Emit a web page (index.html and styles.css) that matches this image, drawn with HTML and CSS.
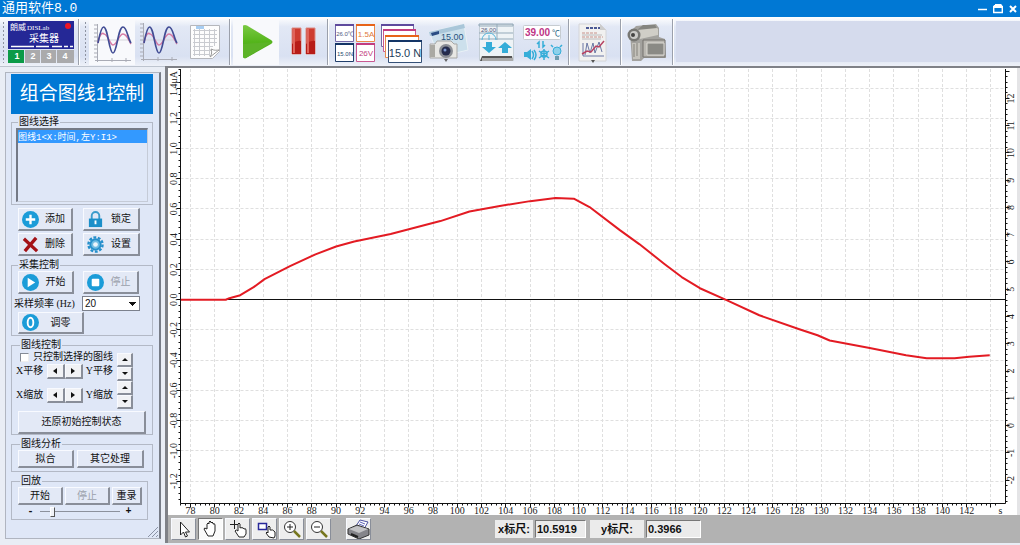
FILE: index.html
```html
<!DOCTYPE html>
<html lang="zh-CN">
<head>
    <meta charset="UTF-8">
    <meta name="viewport" content="width=device-width, initial-scale=1.0">
    <title>通用软件8.0</title>
    <link rel="stylesheet" href="styles.css">
</head>
<body>
    <!-- Window title -->
    <header class="titlebar">
        <h1>通用软件8.0</h1>
        <div class="window-buttons">
            <button type="button" aria-label="最小化"><svg width="10" height="10"><path d="M0 5.500h9" stroke="#fff" stroke-width="1.500"/></svg></button>
            <button type="button" aria-label="还原"><svg width="10" height="10"><path d="M.7 2.500h8.600v6H.7zM2 .7h6.500" fill="none" stroke="#fff" stroke-width="1.400"/><path d="M1 1h8v3H1z" fill="#fff"/></svg></button>
            <button type="button" aria-label="关闭"><svg width="10" height="10"><path d="M2 2l6 6M8 2L2 8" stroke="#fff" stroke-width="2"/></svg></button>
        </div>
    </header>

    <!-- Toolbar -->
    <nav class="toolbar">
        <span class="grip"></span>
        <button type="button" class="collector" aria-label="采集器">
            <svg width="66" height="42">
                <path d="M0 0h66v28H0z" fill="#252896"/>
                <text x="2" y="9" font-size="8" fill="#fff">朗威</text>
                <text x="19" y="9" font-size="7" fill="#fff" class="serif">DISLab</text>
                <circle cx="60" cy="5" r="3" fill="#ee1525"/>
                <text x="21" y="21" font-size="10" fill="#fff">采集器</text>
                <path d="M3 25.500h23M28 25.500h13M44 25.500h10M56 25.500h4M62 25.500h3" stroke="#fff" stroke-width="1.500"/>
                <path d="M0 29h16v13H0z" fill="#0b9a47"/>
                <path d="M17 29h15v13H17zM33 29h15v13H33zM49 29h17v13H49z" fill="#aaaaac"/>
                <g font-size="9" font-weight="bold" fill="#fff" text-anchor="middle">
                    <text x="9" y="38">1</text><text x="25" y="38">2</text><text x="41" y="38">3</text><text x="57" y="38">4</text>
                </g>
            </svg>
        </button>
        <span class="separator"></span>
        <span class="grip"></span>
        <button type="button" class="tool pressed" aria-label="组合图线1">
            <svg width="44" height="44">
                <path d="M7.500 4v38M4 5h3M4 9h3M4 13h3M4 17h3M4 21h3M4 25h3M4 29h3M4 33h3M4 37h3M5 40.500h36M22 38v4M36 38v4" stroke="#a9abb5" fill="none"/>
                <path d="M8 20h33" stroke="#d5d5dc"/>
                <path d="M8 23C10 12 13 13 14 14C18 14 20 25 23 25C27 25 29 14 33 14C37 14 39 21 41 24" fill="none" stroke="#d67ba5" stroke-width="1.500"/>
                <path d="M8 23C9 18 11 7 13.500 7C18 7 19 33 23 33C27 33 28 7 33 7C37 7 38 19 41 23" fill="none" stroke="#414c94" stroke-width="1.700"/>
            </svg>
        </button>
        <button type="button" class="tool" aria-label="组合图线2">
            <svg width="44" height="44">
                <path d="M7.500 3v38M4 4h3M4 8h3M4 12h3M4 16h3M4 20h3M4 24h3M4 28h3M4 32h3M4 36h3M5 39.500h36M22 37v4M36 37v4" stroke="#a9abb5" fill="none"/>
                <path d="M8 20h33" stroke="#d5d5dc"/>
                <path d="M8 23C10 12 13 13 14 14C18 14 20 25 23 25C27 25 29 14 33 14C37 14 39 21 41 24" fill="none" stroke="#d67ba5" stroke-width="1.500"/>
                <path d="M8 23C9 18 11 7 13.500 7C18 7 19 33 23 33C27 33 28 7 33 7C37 7 38 19 41 23" fill="none" stroke="#414c94" stroke-width="1.700"/>
            </svg>
        </button>
        <button type="button" class="tool" aria-label="数据表格">
            <svg width="44" height="44">
                <path d="M8.500 5.500h29v26l-7 7h-22z" fill="#fdfdfd" stroke="#b5b7bc"/>
                <path d="M14 6h8v3h-8z" fill="#a7cdf2"/>
                <path d="M11 10.500h24M11 14.500h24M11 18.500h24M11 22.500h24M11 26.500h20M11 30.500h18M11 34.500h17M12.500 9v27M17.500 9v27M22.500 9v27M27.500 9v27M32.500 9v17" stroke="#c9cbd0"/>
                <path d="M28 37c2-3 2-5 1-8c4 2 6 1 8 1z" fill="#fff" stroke="#999"/>
            </svg>
        </button>
        <span class="separator"></span>
        <button type="button" class="tool pressed" aria-label="开始采集">
            <svg width="44" height="44">
                <defs><linearGradient id="play" x2="0" y2="1"><stop stop-color="#7ac943"/><stop offset=".5" stop-color="#55b51c"/><stop offset="1" stop-color="#49a512"/></linearGradient></defs>
                <path d="M9 5.500q2-1 4 0L37 20q3 2 0 4L12 38q-3 1-3-2z" fill="url(#play)"/>
                <path d="M9 24L38 22L12 38q-3 1-3-2z" fill="#5cb328"/>
            </svg>
        </button>
        <button type="button" class="tool" aria-label="暂停采集">
            <svg width="44" height="44">
                <path d="M12 8h9v26h-9zM26 8h9v26h-9z" fill="#ce3c30" stroke="#dd8d84"/>
                <path d="M12 24q5-4 9-3v13h-9zM26 24q5-4 9-3v13h-9z" fill="#b71c18"/>
                <path d="M13 9h2v24h-2zM27 9h2v24h-2z" fill="#e0645b"/>
            </svg>
        </button>
        <span class="separator"></span>
        <button type="button" class="tool wide" aria-label="多窗口显示">
            <svg width="44" height="44">
                <g fill="#fff" stroke-width="1">
                    <path d="M2.500 4.500h18v17h-18z" stroke="#756aa8"/><path d="M23.500 4.500h18v17h-18z" stroke="#eb8a4b"/>
                    <path d="M2.500 23.500h18v18h-18z" stroke="#213f6c"/><path d="M23.500 23.500h18v18h-18z" stroke="#c95992"/>
                </g>
                <path d="M2 4h19v2H2z" fill="#5e4a9d"/><path d="M23 4h19v2H23z" fill="#e76319"/>
                <path d="M2 23h19v2H2z" fill="#143566"/><path d="M23 23h19v2H23z" fill="#c33c80"/>
                <g text-anchor="middle">
                    <text x="12" y="16" font-size="6" fill="#51577e">26.0℃</text><text x="33" y="17" font-size="8" fill="#e0793c">1.5A</text>
                    <text x="12" y="36" font-size="6" fill="#25486e">15.0N</text><text x="33" y="36" font-size="8" fill="#c33c80">26V</text>
                </g>
            </svg>
        </button>
        <button type="button" class="tool wide" aria-label="层叠窗口">
            <svg width="44" height="44">
                <g fill="#fff">
                    <path d="M1.500 4.500h32v22h-32z" stroke="#756aa8"/><path d="M3.500 9.500h32v22h-32z" stroke="#c95992"/>
                    <path d="M5.500 15.500h33v22h-33z" stroke="#e58a50"/><path d="M8.500 20.500h33v22h-33z" stroke="#355177"/>
                </g>
                <path d="M1 4h33v2H1z" fill="#5e4a9d"/><path d="M3 9h33v2H3z" fill="#c33c80"/>
                <path d="M5 15h34v2H5z" fill="#e76319"/><path d="M8 20h34v2H8z" fill="#143566"/>
                <text x="25" y="37" font-size="11" text-anchor="middle" fill="#1c3d5c">15.0 N</text>
            </svg>
        </button>
        <button type="button" class="tool wide" aria-label="屏幕截图">
            <svg width="44" height="44">
                <path d="M2 12L37 4l4 26l-29 7z" fill="#cce0ec" stroke="#e9f1f6"/>
                <path d="M2 12L37 4l1 4L3 16z" fill="#a9c6d9"/><path d="M4 13l8-2v3l-7 2z" fill="#294d83"/>
                <text x="14" y="20" font-size="9" fill="#28537d">15.00</text>
                <path d="M3 24h5l2-3h14l3 3h3v14H3z" fill="#e7e7e4" stroke="#a7a7a5"/><path d="M3 25h5v12H3z" fill="#aaa9a3"/>
                <circle cx="19" cy="31" r="7" fill="#898d94"/><circle cx="19" cy="31" r="4.500" fill="#242b4c"/><circle cx="18" cy="30" r="1.500" fill="#7b97cf"/>
                <path d="M17 39h4l-2 3z" fill="#666"/>
            </svg>
        </button>
        <button type="button" class="tool wide" aria-label="数据导入导出">
            <svg width="44" height="44">
                <path d="M5.500 4.500h34v36h-34z" fill="#eef3f6" stroke="#c4ced6"/>
                <path d="M5 4h34v2H5zM23 4v16M5 13h34M5 19h34" fill="none" stroke="#93a9b9"/>
                <text x="7" y="12" font-size="6" fill="#557">26.00</text>
                <path d="M8 20a7 7 0 0 1 14 0M15 20v-5" fill="none" stroke="#58b5da"/>
                <path d="M12 22h6v5h4l-7 6l-7-6h4zM28 33h6v-5h4l-7-6l-7 6h4z" fill="#35add8"/>
                <path d="M8 36h30l1 5H6z" fill="#555"/><path d="M8 38h31v3H8z" fill="#aaa"/>
            </svg>
        </button>
        <button type="button" class="tool wide" aria-label="控制输出">
            <svg width="44" height="44">
                <rect x="2.500" y="5.500" width="37" height="14" rx="1" fill="#fff" stroke="#c7ccd1"/>
                <text x="4" y="16" font-size="10" font-weight="bold" fill="#be3485">39.00</text><text x="31" y="16" font-size="8" fill="#29667f">℃</text>
                <g stroke="#35add8" stroke-width="1.500" fill="none"><path d="M18 28v-6l-2 2M22 21v6l2-2M11 31q3 4 0 8M13 30q4 5 0 10M23 29v11M18 31l10 7M28 31l-10 7M32 27l-2-2M39 27l2-2"/><circle cx="23" cy="34" r="3"/></g>
                <path d="M3 32h3l4-3v11l-4-3H3z" fill="#35add8"/><circle cx="36" cy="31" r="4" fill="#8ed1eb" stroke="#35add8"/><path d="M34 36h4v4h-4z" fill="#6f9caf"/>
            </svg>
        </button>
        <span class="separator"></span>
        <button type="button" class="tool" aria-label="实验报告">
            <svg width="44" height="44">
                <path d="M6 4h21l6 6v31H6z" fill="#f1f1f0" stroke="#d4d5d8"/><path d="M27 4v6h6z" fill="#ccc"/>
                <path d="M13 8h14" stroke="#4b5995" stroke-width="2" stroke-dasharray="3 1"/><path d="M9 13h16M9 17h21" stroke="#c8928a" stroke-dasharray="3 1"/><path d="M9 15h20M9 19h19" stroke="#bcbcbc"/>
                <path d="M10 23v13h21M12 35l2-12l3 10l3-10l2 10l4-11l3 10" fill="none" stroke="#6a77a4"/><path d="M9 34l5-3l4 1l5-6l3 1l5-6" fill="none" stroke="#b74363" stroke-width="1.500"/>
                <path d="M18 40h4l-2 3z" fill="#555"/>
            </svg>
        </button>
        <span class="separator"></span>
        <button type="button" class="tool" aria-label="录像">
            <svg width="44" height="44">
                <path d="M5 12l6-6l20-2l3 4v9l6 2l1 19H19l-3 3H7z" fill="#a3a29e"/><path d="M10 10L30 6l3 3v6L15 19z" fill="#d0cec7"/>
                <path d="M12 10l6-5h12l2 3z" fill="#858580"/><circle cx="9" cy="15" r="6.500" fill="#777773"/><circle cx="9" cy="15" r="4" fill="#cbcbc8"/><circle cx="8" cy="15" r="2" fill="#454543"/>
                <path d="M18 20h22v17H18z" fill="#b9b7b1" stroke="#74736f"/><path d="M22 23h17v12H22z" fill="#8a8a85" stroke="#dcdad4"/>
                <path d="M7 23h8v16H8z" fill="#c4c2bb"/><path d="M9 24v13M12 23v13" stroke="#85837d"/>
            </svg>
        </button>
        <span class="separator"></span>
        <span class="toolbar-rest"></span>
    </nav>

    <div class="workspace">
        <!-- Control panel -->
        <aside class="sidebar">
            <form class="panel">
                <h2>组合图线1控制</h2>

                <fieldset class="curve-select">
                    <legend>图线选择</legend>
                    <select size="6" aria-label="图线选择">
                        <option selected>图线1&lt;X:时间,左Y:I1&gt;</option>
                    </select>
                </fieldset>

                <div class="edit-buttons">
                    <button type="button" class="btn icon-btn">
                        <svg viewBox="0 0 18 18"><circle cx="9" cy="9" r="9" fill="#1b9cd8"/><path d="M9 4v10M4 9h10" stroke="#fff" stroke-width="2.500"/></svg>
                        <span>添加</span>
                    </button>
                    <button type="button" class="btn icon-btn">
                        <svg viewBox="0 0 18 18"><path d="M5 9V5a4 4 0 0 1 8 0v4" fill="none" stroke="#3c9ccb" stroke-width="2"/><path d="M2 8h14v9H2z" fill="#1b8fc9"/><path d="M9 10v4" stroke="#fff" stroke-width="2"/></svg>
                        <span>锁定</span>
                    </button>
                    <button type="button" class="btn icon-btn">
                        <svg viewBox="0 0 18 18"><path d="M2 3l14 13M15 2L3 16" stroke="#a31217" stroke-width="3.500"/></svg>
                        <span>删除</span>
                    </button>
                    <button type="button" class="btn icon-btn">
                        <svg viewBox="0 0 18 18"><circle cx="9" cy="9" r="7.500" fill="none" stroke="#258fcb" stroke-width="2.500" stroke-dasharray="3 1.700"/><circle cx="9" cy="9" r="5.500" fill="#70bce2" stroke="#258fcb" stroke-width="2"/><circle cx="9" cy="9" r="2.500" fill="#eef5fc"/></svg>
                        <span>设置</span>
                    </button>
                </div>

                <fieldset class="capture">
                    <legend>采集控制</legend>
                    <div class="capture-row">
                        <button type="button" class="btn icon-btn">
                            <svg viewBox="0 0 18 18"><circle cx="9" cy="9" r="9" fill="#1b9cd8"/><path d="M6 4l8 5l-8 5z" fill="#fff"/></svg>
                            <span>开始</span>
                        </button>
                        <button type="button" class="btn icon-btn" disabled>
                            <svg viewBox="0 0 18 18"><circle cx="9" cy="9" r="9" fill="#1b9cd8"/><rect x="5" y="5" width="8" height="8" rx="1" fill="#fff"/></svg>
                            <span>停止</span>
                        </button>
                    </div>
                    <div class="rate-row">
                        <label for="rate">采样频率 (Hz)</label>
                        <select id="rate"><option>20</option><option>50</option><option>100</option></select>
                    </div>
                    <button type="button" class="btn icon-btn zero-btn">
                        <svg viewBox="0 0 18 18"><circle cx="9" cy="9" r="9" fill="#1b9cd8"/><ellipse cx="9" cy="9" rx="3" ry="5" fill="none" stroke="#fff" stroke-width="2"/></svg>
                        <span>调零</span>
                    </button>
                </fieldset>

                <fieldset class="curve-control">
                    <legend>图线控制</legend>
                    <div class="control-grid">
                        <div class="control-rows">
                            <div class="check-row"><input type="checkbox" id="only"><label for="only">只控制选择的图线</label></div>
                            <div class="shift-row"><span>X平移</span><div class="pair"><button type="button" class="btn arrow left" aria-label="X左移"></button><button type="button" class="btn arrow right" aria-label="X右移"></button></div><span>Y平移</span></div>
                            <div class="shift-row"><span>X缩放</span><div class="pair"><button type="button" class="btn arrow left" aria-label="X缩小"></button><button type="button" class="btn arrow right" aria-label="X放大"></button></div><span>Y缩放</span></div>
                        </div>
                        <div class="spin">
                            <button type="button" class="btn arrow up" aria-label="Y上移"></button>
                            <button type="button" class="btn arrow down" aria-label="Y下移"></button>
                            <button type="button" class="btn arrow up" aria-label="Y放大"></button>
                            <button type="button" class="btn arrow down" aria-label="Y缩小"></button>
                        </div>
                    </div>
                    <button type="button" class="btn reset-btn">还原初始控制状态</button>
                </fieldset>

                <fieldset class="analysis">
                    <legend>图线分析</legend>
                    <div class="analysis-row">
                        <button type="button" class="btn">拟合</button>
                        <button type="button" class="btn">其它处理</button>
                    </div>
                </fieldset>

                <fieldset class="playback">
                    <legend>回放</legend>
                    <div class="playback-row">
                        <button type="button" class="btn">开始</button>
                        <button type="button" class="btn" disabled>停止</button>
                        <button type="button" class="btn">重录</button>
                    </div>
                    <div class="speed-row">
                        <span>-</span><input type="range" min="0" max="100" value="14" aria-label="回放速度"><span>+</span>
                    </div>
                </fieldset>
                <svg class="resize-grip" width="10" height="10"><path d="M0 10L10 0M4 10l6-6M8 10l2-2" stroke="#8b93a5"/></svg>
            </form>
        </aside>

        <main class="plot-window">
            <div class="plot"><svg id="chart" role="img" aria-label="电流-时间图线"></svg></div>

            <!-- Cursor tools and readouts -->
            <footer class="statusbar">
                <div class="cursor-tools">
                    <button type="button" class="btn" aria-label="选择"><svg width="22" height="20"><path d="M7.500 3v13l3-3l2 5l2-1l-2-4h4z" fill="#fff" stroke="#222"/></svg></button>
                    <button type="button" class="btn active" aria-label="平移"><svg width="22" height="20"><path d="M8 17l-4-7q0-2 3 0V5q1-2 2 0V3q1-2 2 0v1q1-2 2 0v1q2-1 2 1v6l-2 5z" fill="#fff" stroke="#222"/></svg></button>
                    <button type="button" class="btn" aria-label="十字光标"><svg width="22" height="20"><path d="M3 5.500h9M7.500 1v9" stroke="#222"/><path d="M12 18l-4-6q1-2 3 0V5q1-2 2 0v4q1-1 2 0q1-1 2 1q2-1 2 1v4l-2 3z" fill="#fff" stroke="#222"/></svg></button>
                    <button type="button" class="btn" aria-label="选区"><svg width="22" height="20"><path d="M4.500 4.500h8v6h-8z" fill="#fff" stroke="#29299a" stroke-width="1.500"/><path d="M15 18l-3-4q1-2 2 0V8q1-2 2 0v3q3-1 5 2v4l-1 2z" fill="#fff" stroke="#222"/></svg></button>
                    <button type="button" class="btn" aria-label="放大"><svg width="22" height="20"><circle cx="9" cy="8" r="5.500" fill="#fff" stroke="#333"/><path d="M6 8h6M9 5v6" stroke="#222"/><path d="M13 12l6 6" stroke="#77771f" stroke-width="2.500"/></svg></button>
                    <button type="button" class="btn" aria-label="缩小"><svg width="22" height="20"><circle cx="9" cy="8" r="5.500" fill="#fff" stroke="#333"/><path d="M6 8h6" stroke="#222"/><path d="M13 12l6 6" stroke="#77771f" stroke-width="2.500"/></svg></button>
                </div>
                <button type="button" class="btn print" aria-label="打印"><svg width="24" height="20"><path d="M9 7l4-6l8 2l-4 7z" fill="#fff" stroke="#4c50a0"/><path d="M13 3l5 2M12 5l5 2" stroke="#5d63b9"/><path d="M1 10l9-4l12 4v6l-10 4L1 15z" fill="#85858a" stroke="#333"/><path d="M2 10l8-3l11 3l-9 4z" fill="#c3c3c5"/><path d="M4 15l7 3" stroke="#222" stroke-width="2"/></svg></button>
                <div class="readouts">
                    <label for="cursor-x">x标尺:</label><input id="cursor-x" type="text" value="10.5919" readonly>
                    <label for="cursor-y" class="label-y">y标尺:</label><input id="cursor-y" type="text" value="0.3966" readonly>
                </div>
            </footer>
        </main>
    </div>
    <script src="chart.js"></script>
</body>
</html>
```

FILE: styles.css
```css
* {
    box-sizing: border-box;
}

body {
    margin: 0;
    min-height: 100vh;
    display: flex;
    flex-direction: column;
    background: #e9edf5;
    color: #111;
    font-family: "Liberation Serif", "Noto Sans CJK SC", sans-serif;
    font-size: 10px;
    line-height: 12px;
}

button, input, select {
    font: inherit;
    color: inherit;
    margin: 0;
    padding: 0;
}

svg {
    display: block;
    font-family: "Liberation Sans", "Noto Sans CJK SC", sans-serif;
}

.serif {
    font-family: "Liberation Serif", serif;
}

/* Title bar */
.titlebar {
    display: flex;
    justify-content: space-between;
    align-items: center;
    height: 17px;
    padding: 0 2px;
    background: #0078d4;
    color: #fff;
}

.titlebar h1 {
    margin: 0;
    font: 13px/17px "Liberation Mono", "Noto Sans CJK SC", monospace;
}

.window-buttons {
    display: flex;
    gap: 5px;
}

.window-buttons button {
    border: 0;
    background: none;
}

/* Toolbar */
.toolbar {
    display: flex;
    align-items: center;
    height: 49px;
    background: linear-gradient(#fff, #e2e8f5 20%, #d9e1f2 80%, #eef1f8);
}

.toolbar button {
    display: flex;
    align-items: center;
    justify-content: center;
    border: 0;
    background: none;
    flex: none;
}

.collector {
    padding: 0 2px 0 1px;
}

.tool {
    width: 46px;
    height: 46px;
}

.toolbar .tool.wide {
    width: 47px;
}

.toolbar .tool.pressed {
    background: #f8f9fc;
}

.grip {
    width: 3px;
    height: 42px;
    margin: 0 2px;
    background: radial-gradient(circle, #8d93a1 1px, transparent 1px) 0 0 / 3px 4px;
}

.separator {
    width: 2px;
    height: 46px;
    margin: 0 2px;
    border-left: 1px solid #9ba0ab;
    border-right: 1px solid #fff;
}

.toolbar-rest {
    flex: 1;
    height: 41px;
    background: #d5dbed;
}

/* Layout below toolbar */
.workspace {
    flex: 1;
    display: grid;
    grid-template-columns: 165px 1fr;
    padding-bottom: 2px;
}

.sidebar {
    padding: 5px 4px 4px 5px;
    border-top: 1px solid #bdc4cf;
    background: #e9edf5;
}

.panel {
    position: relative;
    height: 100%;
    padding: 1px 6px 0 5px;
    border: 1px solid #b0b5c0;
    border-right: 2px solid #777c87;
    background: #dfe7f7;
}

.panel h2 {
    margin: 0 0 2px;
    background: #0078d4;
    color: #fff;
    text-align: center;
    font: 19px/40px "Liberation Sans", "Noto Sans CJK SC", sans-serif;
}

fieldset {
    min-width: 0;
    margin: 0 0 3px;
    padding: 0 4px;
    border: 1px solid #b3b9c6;
}

legend {
    margin-left: 2px;
    padding: 0 1px;
    height: 12px;
}

/* Raised buttons */
.btn {
    display: flex;
    align-items: center;
    justify-content: center;
    background: #e3e9f6;
    border: 1px solid #f8faff;
    border-right: 2px solid #898e99;
    border-bottom: 2px solid #898e99;
    white-space: nowrap;
}

.btn:disabled {
    color: #9aa0ab;
}

.icon-btn {
    height: 23px;
    padding: 0 0 0 3px;
    justify-content: flex-start;
}

.icon-btn svg {
    width: 17px;
    height: 17px;
    flex: none;
}

.icon-btn span {
    flex: 1;
    text-align: center;
}

.curve-select {
    height: 89px;
}

.curve-select select {
    display: block;
    width: 100%;
    height: 74px;
    overflow: hidden;
    border: 1px solid #c5cbd7;
    border-top: 2px solid #747985;
    border-left: 2px solid #747985;
    border-radius: 0;
    background: #dfe7f7;
    font: 9px/12px "Liberation Mono", "Noto Sans CJK SC", monospace;
    outline: none;
}

.curve-select option {
    height: 13px;
    padding: 0;
}

.curve-select option:checked {
    background: #3399ff linear-gradient(#3399ff, #3399ff);
    color: #fff;
}

.edit-buttons {
    display: grid;
    grid-template-columns: 55px 57px;
    gap: 2px 10px;
    margin: 0 0 3px 7px;
}

.capture {
    height: 77px;
    padding: 0 4px 0 2px;
}

.capture legend, .curve-control legend, .analysis legend, .playback legend {
    margin-left: 4px;
}

.capture-row {
    display: grid;
    grid-template-columns: 56px 56px;
    gap: 9px;
    padding-left: 4px;
}

.rate-row {
    display: flex;
    align-items: center;
    gap: 4px;
    margin: 2px 0 1px;
    white-space: nowrap;
}

.rate-row label {
    width: 64px;
}

#rate {
    width: 58px;
    height: 15px;
    padding-left: 2px;
    appearance: none;
    border: 1px solid #7c818d;
    border-radius: 0;
    background: conic-gradient(from -45deg at 50% 100%, #111 90deg, #fff 0) no-repeat right 3px center / 7px 4px #fff;
    font-family: "Liberation Sans", sans-serif;
}

.zero-btn {
    width: 66px;
    height: 22px;
    margin-left: 4px;
}

.curve-control {
    height: 96px;
}

.control-grid {
    display: flex;
    gap: 4px;
}

.control-rows {
    width: 97px;
}

.check-row {
    display: flex;
    align-items: center;
    gap: 4px;
    height: 12px;
    padding-left: 4px;
    white-space: nowrap;
}

.check-row input {
    appearance: none;
    width: 9px;
    height: 9px;
    border: 1px solid #858b96;
    border-right-color: #eee;
    border-bottom-color: #eee;
    background: #fff;
}

.check-row input:checked {
    background: #3399ff;
}

.shift-row {
    display: flex;
    align-items: center;
    justify-content: space-between;
    height: 16px;
    margin-bottom: 8px;
}

.pair {
    display: flex;
}

.arrow {
    width: 18px;
    height: 15px;
    background: #f1f2f5;
}

.arrow::before {
    content: "";
    border: 3px solid transparent;
}

.left::before {
    border-left: 0;
    border-right: 4px solid #111;
}

.right::before {
    border-right: 0;
    border-left: 4px solid #111;
}

.up::before {
    border-top: 0;
    border-bottom-color: #111;
}

.down::before {
    border-bottom: 0;
    border-top-color: #111;
}

.spin {
    display: grid;
    grid-auto-rows: 14px;
    padding-top: 2px;
}

.spin .arrow {
    width: 16px;
    height: 14px;
}

.reset-btn {
    width: 128px;
    height: 23px;
    margin: 0 auto;
}

.analysis {
    height: 34px;
}

.analysis-row {
    display: grid;
    grid-template-columns: 56px 67px;
    gap: 3px;
    padding-left: 2px;
}

.analysis .btn, .playback .btn {
    height: 18px;
}

.playback {
    height: 45px;
    margin-right: 5px;
    margin-bottom: 0;
}

.playback-row {
    display: grid;
    grid-template-columns: 45px 45px 30px;
    gap: 2px;
    padding-left: 2px;
}

.speed-row {
    display: flex;
    align-items: center;
    justify-content: center;
    gap: 6px;
    height: 13px;
    font: bold 10px/12px "Liberation Mono", monospace;
}

.speed-row input {
    appearance: none;
    width: 80px;
    height: 10px;
    background: linear-gradient(#8c919c, #8c919c) no-repeat center / 100% 1px;
}

.speed-row input::-webkit-slider-thumb {
    appearance: none;
    width: 5px;
    height: 10px;
    background: #f1f3f8;
    border: 1px solid #fff;
    border-right-color: #555;
    border-bottom-color: #555;
}

.resize-grip {
    position: absolute;
    right: 1px;
    bottom: 1px;
}

/* Plot area */
.plot-window {
    display: flex;
    flex-direction: column;
    min-width: 0;
    border-left: 3px solid #7f8187;
    border-top: 2px solid #7f8187;
}

.plot {
    flex: 1;
    position: relative;
    min-height: 300px;
    border-right: 3px solid #e4e4e6;
    background: #fff;
}

#chart {
    position: absolute;
    width: 100%;
    height: 100%;
}

.grid-line {
    stroke: #dfdfdf;
    stroke-dasharray: 3 2;
}

.axis {
    stroke: #111;
}

.tick-label {
    font: 10px "Liberation Serif", serif;
    fill: #222;
    text-anchor: middle;
}

.curve {
    fill: none;
    stroke: #e31b23;
    stroke-width: 2;
    stroke-linejoin: round;
}

.statusbar {
    display: flex;
    align-items: center;
    height: 28px;
    padding: 0 3px;
    background: #b2b2b2;
}

.cursor-tools {
    display: flex;
    gap: 2px;
}

.statusbar .btn {
    width: 25px;
    height: 22px;
    background: #eee;
    border-width: 1px;
}

.statusbar .btn.active {
    background: #fafafa;
    border-color: #777 #fff #fff #777;
}

.statusbar .print {
    margin-left: 15px;
}

.readouts {
    display: flex;
    gap: 2px;
    margin-left: 124px;
    font: bold 11px/18px "Liberation Sans", "Noto Sans CJK SC", sans-serif;
    white-space: nowrap;
}

.readouts label {
    width: 38px;
    background: #ebebeb;
    text-align: center;
}

.readouts .label-y {
    width: 54px;
    margin-left: 2px;
}

.readouts input {
    width: 51px;
    height: 18px;
    padding-left: 1px;
    border: 1px solid #777;
    border-right-color: #fff;
    border-bottom-color: #fff;
    background: #ebebeb;
}

.readouts .label-y + input {
    width: 55px;
}
```

FILE: chart.js
```js
const NS = 'http://www.w3.org/2000/svg';
const svg = document.getElementById('chart');

// time (s), current (uA)
const data = [
    [77.2, 0], [80.9, 0], [81.2, 0.01], [82.1, 0.03], [83.2, 0.083], [84.1, 0.136], [86.2, 0.222],
    [88.3, 0.3], [90, 0.352], [91.5, 0.385], [94.5, 0.434], [98.6, 0.52], [101, 0.583],
    [103.5, 0.62], [106, 0.652], [108.1, 0.672], [109.6, 0.668], [110.9, 0.613],
    [113.4, 0.46], [115, 0.368], [117.1, 0.235], [118.5, 0.15], [120, 0.076], [122.2, -0.003],
    [124.9, -0.103], [128.2, -0.195], [129.7, -0.235], [130.7, -0.27], [134, -0.32], [137, -0.368],
    [138.7, -0.387], [141, -0.387], [142.2, -0.377], [143.9, -0.368]
];

function add(name, attrs, text) {
    const el = document.createElementNS(NS, name);
    for (const key in attrs) el.setAttribute(key, attrs[key]);
    if (text !== undefined) el.textContent = text;
    svg.appendChild(el);
}

function line(x1, y1, x2, y2, cls) {
    add('line', { x1, y1, x2, y2, class: cls });
}

function snap(v) {
    return Math.floor(v) + 0.5;
}

function sideLabel(x, y, text) {
    add('text', { class: 'tick-label', transform: `translate(${x} ${y}) rotate(-90)` }, text);
}

function draw() {
    svg.textContent = '';
    const box = svg.getBoundingClientRect();
    const left = 12.5;
    const right = snap(box.width - 12);
    const top = 1;
    const bottom = snap(box.height - 12);
    const px = t => left + (t - 77.17) / (145.2 - 77.17) * (right - left);
    const py = v => top + (1.526 - v) / (1.526 + 1.348) * (bottom - top);
    // second vertical scale
    const ry = v => top + (13.08 - v) / (13.08 + 2.86) * (bottom - top);

    for (let t = 78; t <= 144; t += 2) line(snap(px(t)), top, snap(px(t)), bottom, 'grid-line');
    for (let i = -6; i <= 7; i++) line(left, snap(py(i / 5)), right, snap(py(i / 5)), 'grid-line');

    line(left, top, left, bottom, 'axis');
    line(right, top, right, bottom, 'axis');
    line(left, bottom, right, bottom, 'axis');
    line(left, snap(py(0)), right, snap(py(0)), 'axis');

    // bottom scale
    for (let i = 0; i <= 168; i++) {
        const t = 77.2 + i * 0.4;
        if (t < 145.2) line(snap(px(t)), bottom, snap(px(t)), bottom + 2, 'axis');
    }
    for (let t = 78; t <= 144; t += 2) {
        line(snap(px(t)), bottom, snap(px(t)), bottom + 4, 'axis');
        if (t < 144) add('text', { x: px(t), y: bottom + 10, class: 'tick-label' }, t);
    }
    add('text', { x: right - 5, y: bottom + 10, class: 'tick-label' }, 's');

    // left scale
    for (let i = -33; i <= 38; i++) {
        const y = snap(py(i / 25));
        line(left - (i % 5 ? 2 : 4), y, left, y, 'axis');
    }
    for (let i = -6; i <= 6; i++) sideLabel(9, py(i / 5), (i / 5).toFixed(1));
    sideLabel(9, py(1.43), '1.4μA');

    // right scale
    for (let i = -14; i <= 65; i++) {
        const y = snap(ry(i / 5));
        line(right, y, right + (i % 5 ? 2 : 4), y, 'axis');
    }
    for (let v = -2; v <= 12; v++) sideLabel(right + 8, ry(v), v);

    add('polyline', { class: 'curve', points: data.map(p => px(p[0]) + ',' + py(p[1])).join(' ') });
}

draw();
window.addEventListener('resize', draw);
```
